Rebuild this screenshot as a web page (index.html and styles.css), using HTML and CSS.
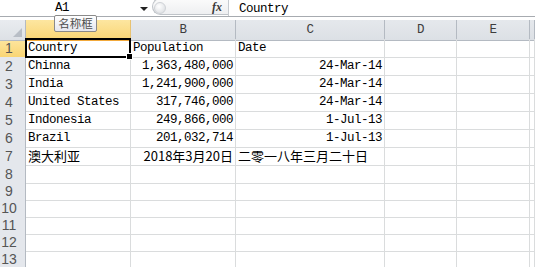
FILE: index.html
```html
<!DOCTYPE html>
<html lang="zh">
<head>
    <meta charset="UTF-8">
    <title>Sheet1</title>
    <link rel="stylesheet" href="styles.css">
</head>
<body>
    <div class="formula-bar">
        <div class="name-box">A1</div>
        <div class="name-arrow"></div>
        <div class="fx-box">
            <span class="fx-knob"></span>
            <span class="fx">fx</span>
        </div>
        <div class="formula-text">Country</div>
    </div>
    <div class="tooltip">名称框</div>

    <div class="sheet">
        <div class="row head">
            <div class="corner"></div>
            <div class="col-head active"></div>
            <div class="col-head">B</div>
            <div class="col-head">C</div>
            <div class="col-head">D</div>
            <div class="col-head">E</div>
            <div class="col-head"></div>
        </div>
        <div class="row tall">
            <div class="row-head active">1</div>
            <div class="cell selected">Country</div>
            <div class="cell">Population</div>
            <div class="cell">Date</div>
            <div class="cell"></div><div class="cell"></div><div class="cell"></div>
        </div>
        <div class="row tall">
            <div class="row-head">2</div>
            <div class="cell">Chinna</div>
            <div class="cell num">1,363,480,000</div>
            <div class="cell num">24-Mar-14</div>
            <div class="cell"></div><div class="cell"></div><div class="cell"></div>
        </div>
        <div class="row tall">
            <div class="row-head">3</div>
            <div class="cell">India</div>
            <div class="cell num">1,241,900,000</div>
            <div class="cell num">24-Mar-14</div>
            <div class="cell"></div><div class="cell"></div><div class="cell"></div>
        </div>
        <div class="row tall">
            <div class="row-head">4</div>
            <div class="cell">United States</div>
            <div class="cell num">317,746,000</div>
            <div class="cell num">24-Mar-14</div>
            <div class="cell"></div><div class="cell"></div><div class="cell"></div>
        </div>
        <div class="row tall">
            <div class="row-head">5</div>
            <div class="cell">Indonesia</div>
            <div class="cell num">249,866,000</div>
            <div class="cell num">1-Jul-13</div>
            <div class="cell"></div><div class="cell"></div><div class="cell"></div>
        </div>
        <div class="row tall">
            <div class="row-head">6</div>
            <div class="cell">Brazil</div>
            <div class="cell num">201,032,714</div>
            <div class="cell num">1-Jul-13</div>
            <div class="cell"></div><div class="cell"></div><div class="cell"></div>
        </div>
        <div class="row tall">
            <div class="row-head">7</div>
            <div class="cell cjk">澳大利亚</div>
            <div class="cell num cjk">2018年3月20日</div>
            <div class="cell cjk">二零一八年三月二十日</div>
            <div class="cell"></div><div class="cell"></div><div class="cell"></div>
        </div>
        <div class="row"><div class="row-head">8</div><div class="cell"></div><div class="cell"></div><div class="cell"></div><div class="cell"></div><div class="cell"></div><div class="cell"></div></div>
        <div class="row"><div class="row-head">9</div><div class="cell"></div><div class="cell"></div><div class="cell"></div><div class="cell"></div><div class="cell"></div><div class="cell"></div></div>
        <div class="row"><div class="row-head">10</div><div class="cell"></div><div class="cell"></div><div class="cell"></div><div class="cell"></div><div class="cell"></div><div class="cell"></div></div>
        <div class="row"><div class="row-head">11</div><div class="cell"></div><div class="cell"></div><div class="cell"></div><div class="cell"></div><div class="cell"></div><div class="cell"></div></div>
        <div class="row"><div class="row-head">12</div><div class="cell"></div><div class="cell"></div><div class="cell"></div><div class="cell"></div><div class="cell"></div><div class="cell"></div></div>
        <div class="row"><div class="row-head">13</div><div class="cell"></div><div class="cell"></div><div class="cell"></div><div class="cell"></div><div class="cell"></div><div class="cell"></div></div>
    </div>
</body>
</html>
```

FILE: styles.css
```css
body {
    margin: 0;
    background: #fff;
    font-family: "Liberation Mono", monospace;
    font-size: 12.5px;
    letter-spacing: -0.5px;
    color: #000;
    overflow: hidden;
}

/* formula bar */
.formula-bar {
    display: flex;
    height: 16px;
    border-bottom: 1px solid #a7abb0;
    margin-bottom: 3px;
}
.name-box {
    width: 124px;
    text-align: center;
    line-height: 17px;
}
.name-arrow {
    width: 0;
    height: 0;
    margin: 7px 0 0 16px;
    border-left: 4px solid transparent;
    border-right: 4px solid transparent;
    border-top: 4px solid #222;
}
.fx-box {
    display: flex;
    align-items: center;
    justify-content: space-between;
    width: 76px;
    height: 17px;
    margin: -2px 0 0 4px;
    padding: 0 6px 0 1px;
    box-sizing: border-box;
    border: 1px solid #bfc3c8;
    border-right: none;
    border-radius: 9px 0 0 9px;
    background: linear-gradient(#fbfbfb, #eeeff1);
}
.fx-knob {
    width: 12px;
    height: 12px;
    border-radius: 50%;
    border: 1px solid #cfd2d6;
    background: radial-gradient(circle at 40% 35%, #ffffff, #d6d9dd);
    box-sizing: border-box;
    margin-top: 2px;
}
.fx {
    font-family: "Liberation Serif", serif;
    font-style: italic;
    font-weight: bold;
    font-size: 12px;
    letter-spacing: 0;
    color: #3a3a3a;
    margin-top: 1px;
}
.formula-text {
    border-left: 1px solid #c6cacf;
    padding-left: 10px;
    line-height: 18px;
    flex: 1;
}

/* tooltip */
.tooltip {
    position: absolute;
    left: 54px;
    top: 15px;
    width: 43px;
    height: 17px;
    box-sizing: border-box;
    border: 1px solid #8a8a8a;
    border-radius: 2px;
    background: linear-gradient(#ffffff, #e5e6ee);
    font-family: "Noto Sans CJK SC", sans-serif;
    font-size: 11.5px;
    letter-spacing: 0;
    line-height: 15px;
    text-align: center;
    color: #4d4d4d;
    z-index: 2;
}

/* grid */
.row {
    display: grid;
    grid-template-columns: 26px 105px 105px 149px 72px 73px 1fr;
    height: 17px;
}
.row.tall { height: 18px; }
.row.head { height: 19px; }

.corner, .col-head, .row-head, .cell {
    box-sizing: border-box;
}
.corner {
    position: relative;
    background: linear-gradient(#e9ecf0, #dde1e6);
    border-right: 1px solid #b4bac2;
    border-bottom: 1px solid #b4bac2;
}
.corner::after {
    content: "";
    position: absolute;
    right: 3px;
    bottom: 3px;
    border-left: 9px solid transparent;
    border-bottom: 9px solid #b8bec6;
}
.col-head {
    background: linear-gradient(#e5e8ec, #dce0e5);
    border-right: 1px solid #b4bac2;
    border-bottom: 1px solid #b4bac2;
    text-align: center;
    line-height: 20px;
    color: #3d3d3d;
}
.col-head.active {
    background: linear-gradient(#fde6a0, #f9d574);
    border-bottom: 1px solid #f2a93b;
    border-right-color: #e8c271;
}
.row-head {
    background: #e4e7ec;
    border-right: 1px solid #b4bac2;
    border-bottom: 1px solid #cfd3d8;
    font-family: "Liberation Sans", sans-serif;
    font-size: 14px;
    letter-spacing: 0;
    line-height: 18px;
    color: #555;
    padding-right: 7px;
    text-align: center;
}
.row-head.active {
    background: linear-gradient(#fde6a0, #f9d574);
    border-right: 1px solid #f2a93b;
}
.cell {
    border-right: 1px solid #dadcdd;
    border-bottom: 1px solid #dadcdd;
    padding: 1px 2px 0;
    line-height: 17px;
    white-space: nowrap;
    overflow: hidden;
}
.cell.num { text-align: right; }
.cell.cjk {
    font-family: "Noto Sans CJK SC", sans-serif;
    font-size: 13px;
    letter-spacing: 0;
    line-height: 16px;
    overflow: visible;
}
.cell.selected {
    position: relative;
    overflow: visible;
}
.cell.selected::before {
    content: "";
    position: absolute;
    left: -1px;
    top: -1px;
    right: -1px;
    bottom: -1px;
    border: 2px solid #000;
}
.cell.selected::after {
    content: "";
    position: absolute;
    right: -3px;
    bottom: -3px;
    width: 5px;
    height: 5px;
    background: #000;
    border: 1px solid #fff;
}
```
